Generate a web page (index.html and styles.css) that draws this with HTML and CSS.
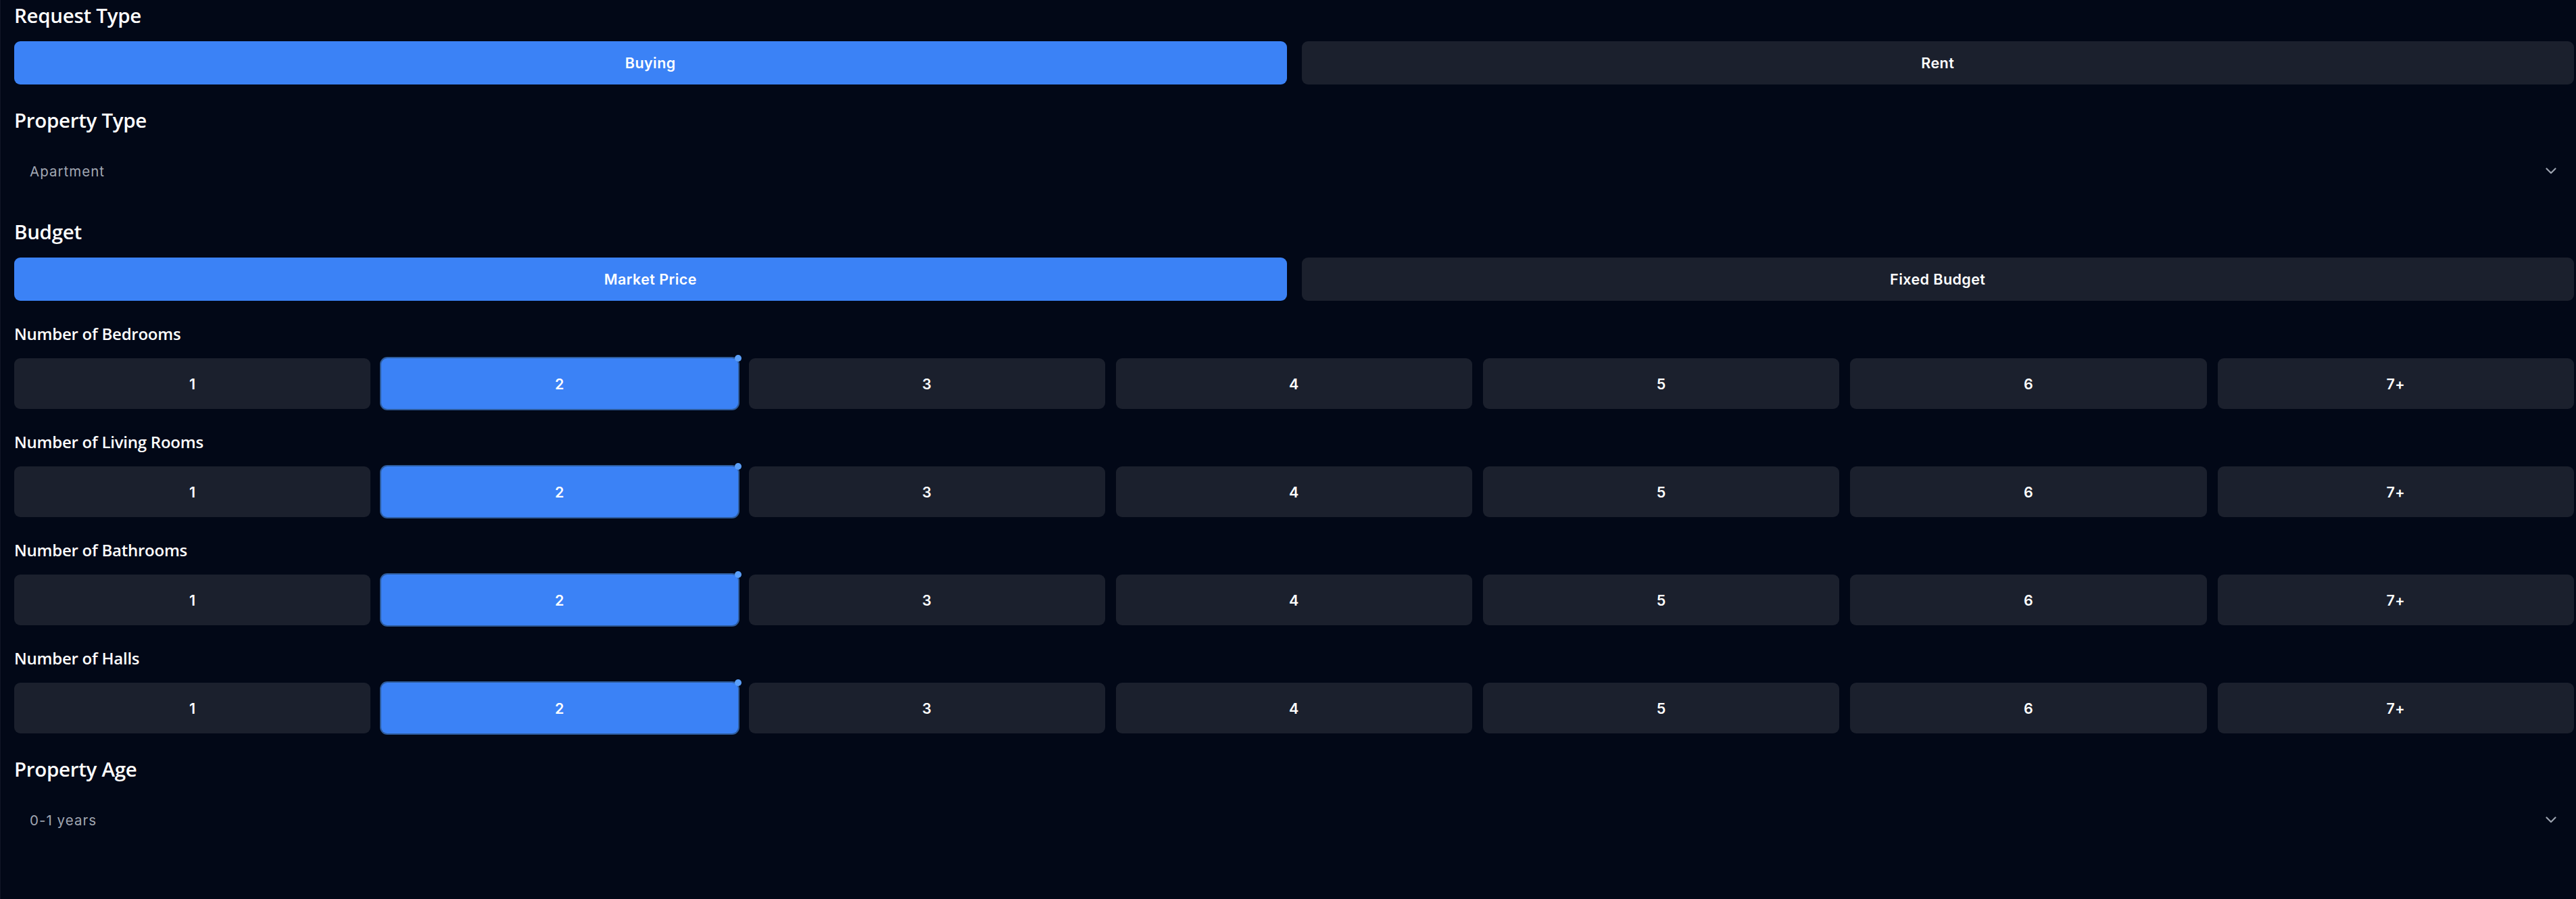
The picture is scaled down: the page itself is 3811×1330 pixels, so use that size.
FILE: index.html
```html
<!DOCTYPE html>
<html lang="en">
<head>
<meta charset="utf-8">
<title>Property Request</title>
<link rel="stylesheet" href="styles.css">
</head>
<body>
<main class="form">
  <section class="section">
    <h2 class="heading">Request Type</h2>
    <div class="toggle two">
      <button class="opt active">Buying</button>
      <button class="opt">Rent</button>
    </div>
  </section>

  <section class="section">
    <h2 class="heading">Property Type</h2>
    <div class="select">
      <span class="select-value">Apartment</span>
      <svg class="chev" width="16" height="10" viewBox="0 0 16 10"><path d="M1.5 1.5 L8 8 L14.5 1.5" fill="none" stroke="currentColor" stroke-width="2.2" stroke-linecap="round" stroke-linejoin="round"/></svg>
    </div>
  </section>

  <section class="section">
    <h2 class="heading">Budget</h2>
    <div class="toggle two">
      <button class="opt active">Market Price</button>
      <button class="opt">Fixed Budget</button>
    </div>
  </section>

  <section class="section small">
    <h3 class="label">Number of Bedrooms</h3>
    <div class="toggle seven">
      <button class="num">1</button>
      <button class="num selected">2<span class="dot"></span></button>
      <button class="num">3</button>
      <button class="num">4</button>
      <button class="num">5</button>
      <button class="num">6</button>
      <button class="num">7+</button>
    </div>
  </section>

  <section class="section small">
    <h3 class="label">Number of Living Rooms</h3>
    <div class="toggle seven">
      <button class="num">1</button>
      <button class="num selected">2<span class="dot"></span></button>
      <button class="num">3</button>
      <button class="num">4</button>
      <button class="num">5</button>
      <button class="num">6</button>
      <button class="num">7+</button>
    </div>
  </section>

  <section class="section small">
    <h3 class="label">Number of Bathrooms</h3>
    <div class="toggle seven">
      <button class="num">1</button>
      <button class="num selected">2<span class="dot"></span></button>
      <button class="num">3</button>
      <button class="num">4</button>
      <button class="num">5</button>
      <button class="num">6</button>
      <button class="num">7+</button>
    </div>
  </section>

  <section class="section small">
    <h3 class="label">Number of Halls</h3>
    <div class="toggle seven">
      <button class="num">1</button>
      <button class="num selected">2<span class="dot"></span></button>
      <button class="num">3</button>
      <button class="num">4</button>
      <button class="num">5</button>
      <button class="num">6</button>
      <button class="num">7+</button>
    </div>
  </section>

  <section class="section">
    <h2 class="heading">Property Age</h2>
    <div class="select">
      <span class="select-value">0-1 years</span>
      <svg class="chev" width="16" height="10" viewBox="0 0 16 10"><path d="M1.5 1.5 L8 8 L14.5 1.5" fill="none" stroke="currentColor" stroke-width="2.2" stroke-linecap="round" stroke-linejoin="round"/></svg>
    </div>
  </section>
</main>
</body>
</html>
```

FILE: styles.css
```css
* { box-sizing: border-box; }

html, body {
  margin: 0;
  padding: 0;
  background: #020817;
  height: 100%;
}

body {
  border-left: 1px solid #111626;
  font-family: "Open Sans", "Noto Sans", sans-serif;
  color: #ffffff;
}

.form {
  display: flex;
  flex-direction: column;
  gap: 33px;
  padding: 3px 3px 0 20px;
}

.section {
  display: flex;
  flex-direction: column;
  gap: 18px;
}

.section.small {
  gap: 20px;
}

.heading {
  margin: 0;
  font-size: 29.5px;
  line-height: 40px;
  font-weight: 600;
  letter-spacing: -0.01em;
  color: #ffffff;
}

.label {
  margin: 0;
  font-size: 24px;
  line-height: 32px;
  font-weight: 600;
  letter-spacing: -0.01em;
  color: #ffffff;
}

.toggle {
  display: grid;
}

.toggle.two {
  grid-template-columns: 1fr 1fr;
  gap: 22px;
}

.toggle.seven {
  grid-template-columns: repeat(7, 1fr);
  gap: 16px;
}

.opt,
.num {
  position: relative;
  border: none;
  margin: 0;
  border-radius: 9px;
  background: #1b202d;
  color: #ffffff;
  font-family: "Inter", "Lato", sans-serif;
  font-weight: 600;
  font-size: 21.5px;
  letter-spacing: 0.02em;
  cursor: pointer;
}

.opt {
  height: 64px;
}

.num {
  height: 75px;
}

.opt.active,
.num.selected {
  background: #3b82f6;
}

.num.selected {
  box-shadow: 0 0 0 2px #2e5c9c;
}

.dot {
  position: absolute;
  top: -5px;
  right: -5px;
  width: 10px;
  height: 10px;
  border-radius: 50%;
  background: #5b9ff8;
}

.select {
  height: 74px;
  display: flex;
  align-items: center;
  justify-content: space-between;
  padding: 0 26px 0 23px;
}

.select-value {
  font-family: "Inter", "Lato", sans-serif;
  font-size: 20.5px;
  font-weight: 400;
  letter-spacing: 0.05em;
  color: #a1a7b3;
}

.chev {
  color: #9ca3af;
  display: block;
}
```
